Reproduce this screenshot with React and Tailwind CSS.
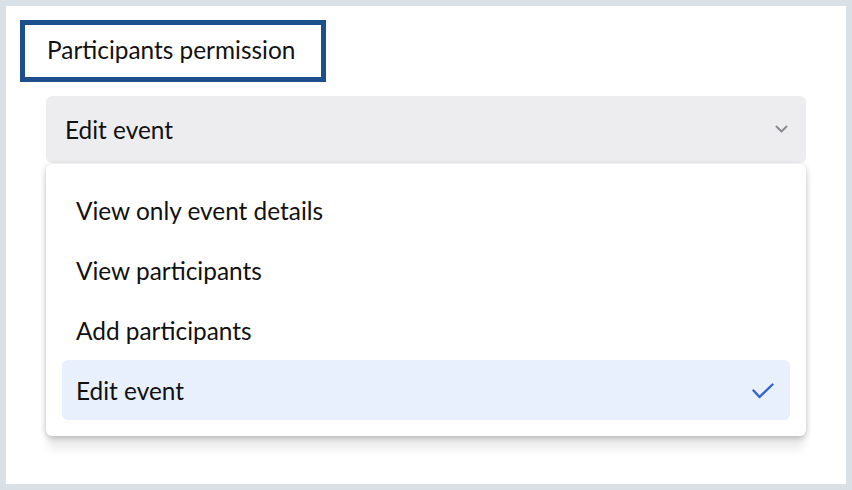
import React from 'react';

// ── Data ───────────────────────────────────────────────────────────────────────

const OPTIONS = [
  'View only event details',
  'View participants',
  'Add participants',
  'Edit event',
];

const SELECTED = 'Edit event';

// ── Icons ──────────────────────────────────────────────────────────────────────

const Chevron = () => (
  <svg width="13" height="9" viewBox="0 0 13 9" fill="none">
    <path d="M1.5 1.5 L6.5 6.5 L11.5 1.5" stroke="#8a8a90" strokeWidth="2" strokeLinecap="round" strokeLinejoin="round" />
  </svg>
);

const Check = () => (
  <svg width="22" height="16" viewBox="0 0 22 16" fill="none">
    <path d="M1.5 7.5 L7.5 14 L20.5 1.5" stroke="#3563c9" strokeWidth="2.4" strokeLinecap="round" strokeLinejoin="round" />
  </svg>
);

// ── Components ─────────────────────────────────────────────────────────────────

const Option = ({ label, active }) => (
  <div
    className={`h-[60px] flex items-center justify-between pl-[14px] pr-[16px] pt-[2px] rounded-md ${
      active ? 'bg-[#e8f0fd]' : ''
    }`}
  >
    <span>{label}</span>
    {active && <Check />}
  </div>
);

export default function App() {
  return (
    <div
      className="w-[852px] h-[490px] bg-[#d9e1e6] p-[6px] text-[24.4px] text-[#111]"
      style={{ fontFamily: 'Lato, "Noto Sans", sans-serif' }}
    >
      <div className="h-full bg-white pt-[14px] pl-[14px] pr-[40px]">
        {/* Title */}
        <div className="flex items-center w-[306px] h-[62px] pl-[22px] pb-[2px] border-[5px] border-[#1c4f8b]">
          Participants permission
        </div>

        <div className="ml-[26px] mt-[14px]">
          {/* Select */}
          <div className="h-[67px] flex items-center justify-between pl-[19px] pr-[18px] rounded-md bg-[#ededf0]">
            <span className="pt-[2px]">Edit event</span>
            <Chevron />
          </div>

          {/* Menu */}
          <div className="mt-px bg-white rounded-md p-4 shadow-[0_2px_6px_rgba(0,0,0,0.25),0_16px_8px_-2px_rgba(0,0,0,0.07)]">
            {OPTIONS.map((o) => (
              <Option key={o} label={o} active={o === SELECTED} />
            ))}
          </div>
        </div>
      </div>
    </div>
  );
}
